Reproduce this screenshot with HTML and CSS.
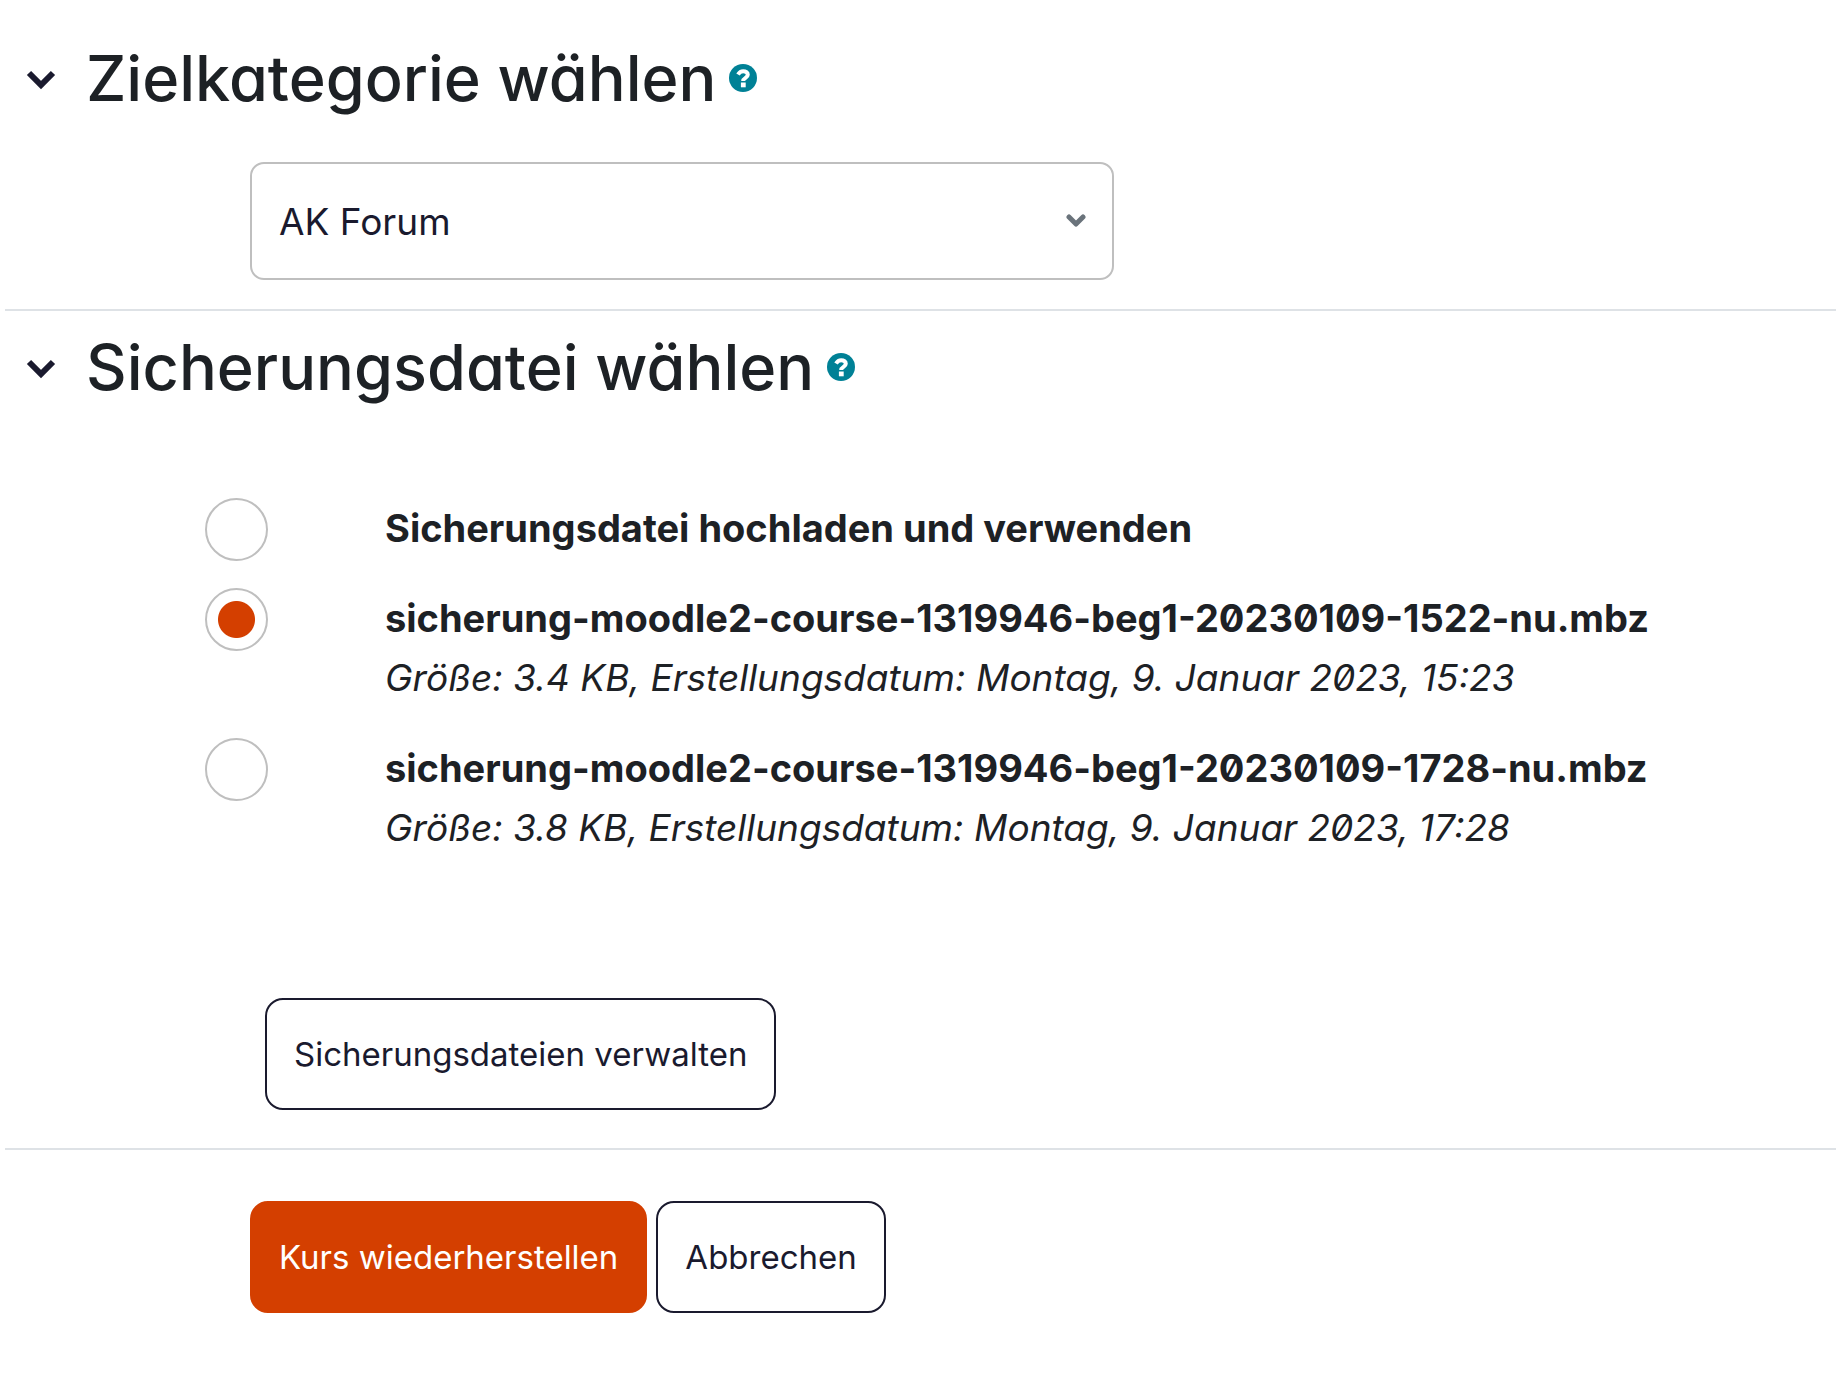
FILE: index.html
```
<!DOCTYPE html>
<html lang="de">
<head>
    <meta charset="UTF-8">
    <meta name="viewport" content="width=device-width, initial-scale=1.0">
    <title>Kurs wiederherstellen</title>
    <link rel="stylesheet" href="styles.css">
</head>
<body>
    <form class="restore-form">
        <section class="section">
            <div class="section-header">
                <button type="button" class="toggle" aria-label="Zielkategorie einklappen">
                    <svg viewBox="0 0 30 20"><path d="M3 3 15 15 27 3"/></svg>
                </button>
                <h2 id="category-title">Zielkategorie wählen</h2>
                <button type="button" class="help" aria-label="Hilfe zur Zielkategorie">
                    <svg viewBox="0 0 28 28"><circle cx="14" cy="14" r="14"/><path class="mark" d="M9 10.500C10.500 8 12 7.200 14.200 7.200c2.600 0 4.600 1.400 4.600 3.600 0 3.200-4.600 2.900-4.600 6.200"/><path class="dot" d="M11.900 18.500h4.800v4.800h-4.800z"/></svg>
                </button>
            </div>
            <div class="select-wrap">
                <select class="select" aria-labelledby="category-title">
                    <option>AK Forum</option>
                </select>
                <svg class="select-arrow" viewBox="0 0 20 14"><path d="M3 3 10 10 17 3"/></svg>
            </div>
        </section>

        <section class="section">
            <div class="section-header">
                <button type="button" class="toggle" aria-label="Sicherungsdatei einklappen">
                    <svg viewBox="0 0 30 20"><path d="M3 3 15 15 27 3"/></svg>
                </button>
                <h2 id="file-title">Sicherungsdatei wählen</h2>
                <button type="button" class="help" aria-label="Hilfe zur Sicherungsdatei">
                    <svg viewBox="0 0 28 28"><circle cx="14" cy="14" r="14"/><path class="mark" d="M9 10.500C10.500 8 12 7.200 14.200 7.200c2.600 0 4.600 1.400 4.600 3.600 0 3.200-4.600 2.900-4.600 6.200"/><path class="dot" d="M11.900 18.500h4.800v4.800h-4.800z"/></svg>
                </button>
            </div>
            <div class="files" role="radiogroup" aria-labelledby="file-title">
                <div class="file">
                    <input type="radio" name="file" id="file-upload" value="upload">
                    <label for="file-upload"><strong>Sicherungsdatei hochladen und verwenden</strong></label>
                </div>
                <div class="file">
                    <input type="radio" name="file" id="file-1522" value="1522" checked>
                    <label for="file-1522">
                        <strong>sicherung-moodle2-course-1319946-beg1-20230109-1522-nu.mbz</strong>
                        <em>Größe: 3.4 KB, Erstellungsdatum: Montag, 9. Januar 2023, 15:23</em>
                    </label>
                </div>
                <div class="file">
                    <input type="radio" name="file" id="file-1728" value="1728">
                    <label for="file-1728">
                        <strong>sicherung-moodle2-course-1319946-beg1-20230109-1728-nu.mbz</strong>
                        <em>Größe: 3.8 KB, Erstellungsdatum: Montag, 9. Januar 2023, 17:28</em>
                    </label>
                </div>
            </div>
            <div class="manage">
                <button type="button" class="btn">Sicherungsdateien verwalten</button>
            </div>
        </section>

        <div class="actions">
            <button type="submit" class="btn btn-primary">Kurs wiederherstellen</button>
            <button type="button" class="btn">Abbrechen</button>
        </div>
    </form>
</body>
</html>
```
FILE: styles.css
```
* {
    box-sizing: border-box;
}

body {
    margin: 0;
    background: #fff;
    color: #1d2125;
    font-family: Inter, "Noto Sans", sans-serif;
}

.restore-form {
    padding: 22px 0 70px 5px;
}

/* Collapsible sections */
.section {
    padding-top: 20px;
    border-bottom: 2px solid #dee2e6;
}

.section-header {
    display: flex;
    align-items: center;
    height: 72px;
}

.section-header h2 {
    margin: 0 13px 0 30px;
    font-size: 63px;
    font-weight: 500;
    line-height: 72px;
    font-feature-settings: "cv11";
}

.toggle,
.help {
    display: flex;
    padding: 0;
    border: 0;
    background: none;
    cursor: pointer;
}

.toggle {
    margin: 4px 0 0 21px;
}

.toggle svg {
    width: 30px;
    height: 20px;
    fill: none;
    stroke: #1a1a2e;
    stroke-width: 6;
}

.help svg {
    width: 28px;
    height: 28px;
    fill: #008196;
}

.help .mark {
    fill: none;
    stroke: #fff;
    stroke-width: 4;
}

.help .dot {
    fill: #fff;
}

/* Category drop-down */
.select-wrap {
    position: relative;
    width: 48%;
    max-width: 864px;
    margin: 48px 0 29px 245px;
}

.select {
    width: 100%;
    height: 118px;
    padding: 0 72px 0 27px;
    border: 2px solid #bfbfbf;
    border-radius: 14px;
    background: #fff;
    color: #1a1a2e;
    font-family: inherit;
    font-size: 37px;
    appearance: none;
}

.select-arrow {
    position: absolute;
    top: 52px;
    right: 28px;
    width: 20px;
    height: 14px;
    fill: none;
    stroke: #6a737b;
    stroke-width: 5;
    stroke-linecap: round;
    stroke-linejoin: round;
    pointer-events: none;
}

/* Backup files */
.files {
    display: flex;
    flex-direction: column;
    gap: 30px;
    margin: 95px 0 0 200px;
}

.file {
    display: flex;
    align-items: flex-start;
    gap: 117px;
}

.file input {
    flex: none;
    width: 63px;
    height: 63px;
    margin: 0 0 -3px;
    border: 2px solid #bfbfbf;
    border-radius: 50%;
    background: #fff;
    appearance: none;
}

.file input:checked {
    background: radial-gradient(circle closest-side, #d43f00 18px, #fff 19px);
}

.file label {
    line-height: 60px;
    font-feature-settings: "zero";
}

.file strong,
.file em {
    display: block;
}

.file strong {
    font-size: 38px;
}

.file em {
    font-size: 37px;
}

/* Buttons */
.btn {
    height: 112px;
    padding: 0 27px;
    border: 2px solid #1a1a2e;
    border-radius: 18px;
    background: #fff;
    color: #1a1a2e;
    font-family: inherit;
    font-size: 33px;
    cursor: pointer;
}

.btn-primary {
    border-color: #d43f00;
    background: #d43f00;
    color: #fff;
}

.manage {
    margin: 140px 0 38px 260px;
}

.actions {
    display: flex;
    gap: 9px;
    margin: 51px 0 0 245px;
}
```
